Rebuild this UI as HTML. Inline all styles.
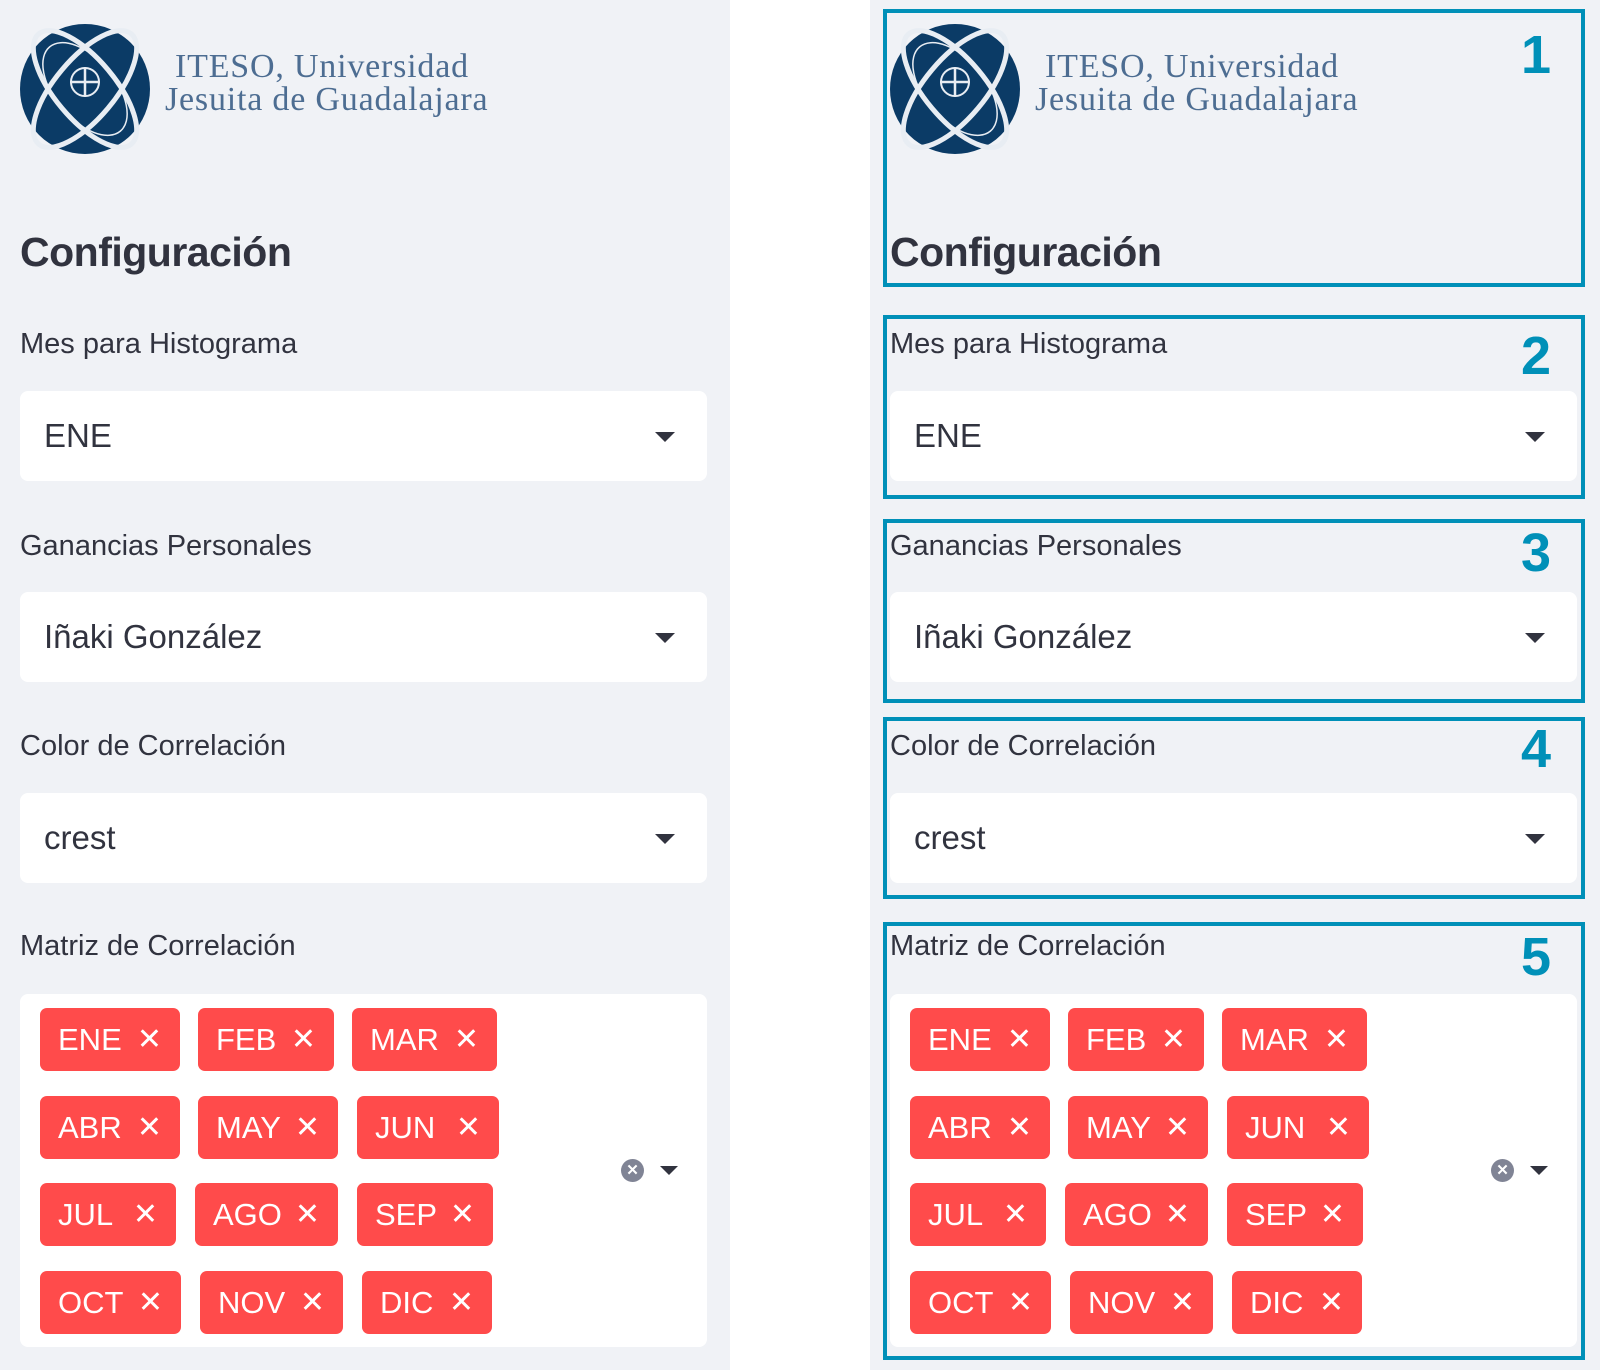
<!DOCTYPE html>
<html><head><meta charset="utf-8"><style>
*{margin:0;padding:0;box-sizing:border-box}
body{width:1600px;height:1370px;background:#fff;position:relative;overflow:hidden;font-family:"Liberation Sans",sans-serif;color:#31333f}
.panel{position:absolute;top:0;width:730px;height:1370px;background:#f0f2f6}
.a{position:absolute}
.h{font-weight:bold;font-size:41px;letter-spacing:-0.5px}
.lbl{font-size:29px}
.sel{position:absolute;left:20px;width:687px;height:90px;background:#fff;border-radius:8px}
.sel span{position:absolute;left:24px;top:26px;font-size:33px}
.arr{position:absolute;right:32px;top:41px;width:0;height:0;border-left:10px solid transparent;border-right:10px solid transparent;border-top:10px solid #31333f}
.tag{position:absolute;height:63px;background:#ff4b4b;border-radius:7px;color:#fff;font-size:31px;line-height:63px;padding-left:18px}
.tag i{font-style:normal;position:absolute;right:18px;top:0;font-size:30px}
.box{position:absolute;border:4px solid #0090b8}
.num{position:absolute;color:#0090b8;font-weight:bold;font-size:54px;width:40px;text-align:center}
.logotxt{font-family:"Liberation Serif",serif;color:#4d6d92;font-size:34px;line-height:33px;letter-spacing:0.8px}
</style></head><body>

<div class="panel" style="left:0">
<svg class="a" style="left:18px;top:22px" width="134" height="134" viewBox="0 0 134 134">
<circle cx="67" cy="67" r="65" fill="#0b3b66"/>
<ellipse cx="67" cy="67" rx="72" ry="30" transform="rotate(50 67 67)" fill="none" stroke="#e8edf3" stroke-width="5"/>
<ellipse cx="67" cy="67" rx="72" ry="30" transform="rotate(-50 67 67)" fill="none" stroke="#e8edf3" stroke-width="5"/>
<ellipse cx="67" cy="67" rx="55" ry="30" transform="rotate(50 67 67)" fill="none" stroke="#e8edf3" stroke-width="1.5"/>
<circle cx="67" cy="60" r="14" fill="none" stroke="#e8edf3" stroke-width="2"/>
<path d="M67 45V75M52 60H82" stroke="#e8edf3" stroke-width="2.5"/>
</svg>
<div class="a logotxt" style="left:175px;top:50px">ITESO, Universidad</div>
<div class="a logotxt" style="left:165px;top:83px">Jesuita de Guadalajara</div>
</div>
<div class="panel" style="left:870px">
<svg class="a" style="left:18px;top:22px" width="134" height="134" viewBox="0 0 134 134">
<circle cx="67" cy="67" r="65" fill="#0b3b66"/>
<ellipse cx="67" cy="67" rx="72" ry="30" transform="rotate(50 67 67)" fill="none" stroke="#e8edf3" stroke-width="5"/>
<ellipse cx="67" cy="67" rx="72" ry="30" transform="rotate(-50 67 67)" fill="none" stroke="#e8edf3" stroke-width="5"/>
<ellipse cx="67" cy="67" rx="55" ry="30" transform="rotate(50 67 67)" fill="none" stroke="#e8edf3" stroke-width="1.5"/>
<circle cx="67" cy="60" r="14" fill="none" stroke="#e8edf3" stroke-width="2"/>
<path d="M67 45V75M52 60H82" stroke="#e8edf3" stroke-width="2.5"/>
</svg>
<div class="a logotxt" style="left:175px;top:50px">ITESO, Universidad</div>
<div class="a logotxt" style="left:165px;top:83px">Jesuita de Guadalajara</div>
</div>

<div id="L" class="a" style="left:0;top:0;width:730px;height:1370px"></div>

<script>
function build(x){
 var h='';
 h+='<div class="a h" style="left:'+(x+20)+'px;top:229px">Configuración</div>';
 var labels=[['Mes para Histograma',328,391,'ENE'],['Ganancias Personales',530,592,'Iñaki González'],['Color de Correlación',730,793,'crest'],['Matriz de Correlación',930,994,null]];
 labels.forEach(function(l){
  h+='<div class="a lbl" style="left:'+(x+20)+'px;top:'+l[1]+'px">'+l[0]+'</div>';
  if(l[3]) h+='<div class="sel" style="left:'+(x+20)+'px;top:'+l[2]+'px"><span>'+l[3]+'</span><div class="arr"></div></div>';
 });
 h+='<div class="a" style="left:'+(x+20)+'px;top:994px;width:687px;height:353px;background:#fff;border-radius:8px"></div>';
 var tags=[[['ENE',40,180],['FEB',198,334],['MAR',352,497]],[['ABR',40,180],['MAY',198,338],['JUN',357,499]],[['JUL',40,176],['AGO',195,338],['SEP',357,493]],[['OCT',40,181],['NOV',200,343],['DIC',362,492]]];
 tags.forEach(function(r,i){var y=1008+i*87.5;r.forEach(function(t){
  h+='<div class="tag" style="left:'+(x+t[1])+'px;top:'+y+'px;width:'+(t[2]-t[1])+'px">'+t[0]+'<i>✕</i></div>';});});
 h+='<div class="a" style="left:'+(x+621)+'px;top:1159px;width:23px;height:23px;border-radius:50%;background:#808495;color:#fff;font-size:15px;line-height:23px;text-align:center;font-weight:bold">✕</div>';
 h+='<div class="a" style="left:'+(x+660)+'px;top:1166px;width:0;height:0;border-left:9px solid transparent;border-right:9px solid transparent;border-top:9px solid #31333f"></div>';
 return h;
}
var out=build(0)+build(870);
var boxes=[[9,287,'1',24],[315,499,'2',325],[519,703,'3',522],[717,899,'4',718],[922,1360,'5',926]];
boxes.forEach(function(b){
 out+='<div class="box" style="left:883px;top:'+b[0]+'px;width:702px;height:'+(b[1]-b[0])+'px"></div>';
 out+='<div class="num" style="left:1516px;top:'+b[3]+'px">'+b[2]+'</div>';
});
document.getElementById('L').outerHTML=out;
</script>
</body></html>
